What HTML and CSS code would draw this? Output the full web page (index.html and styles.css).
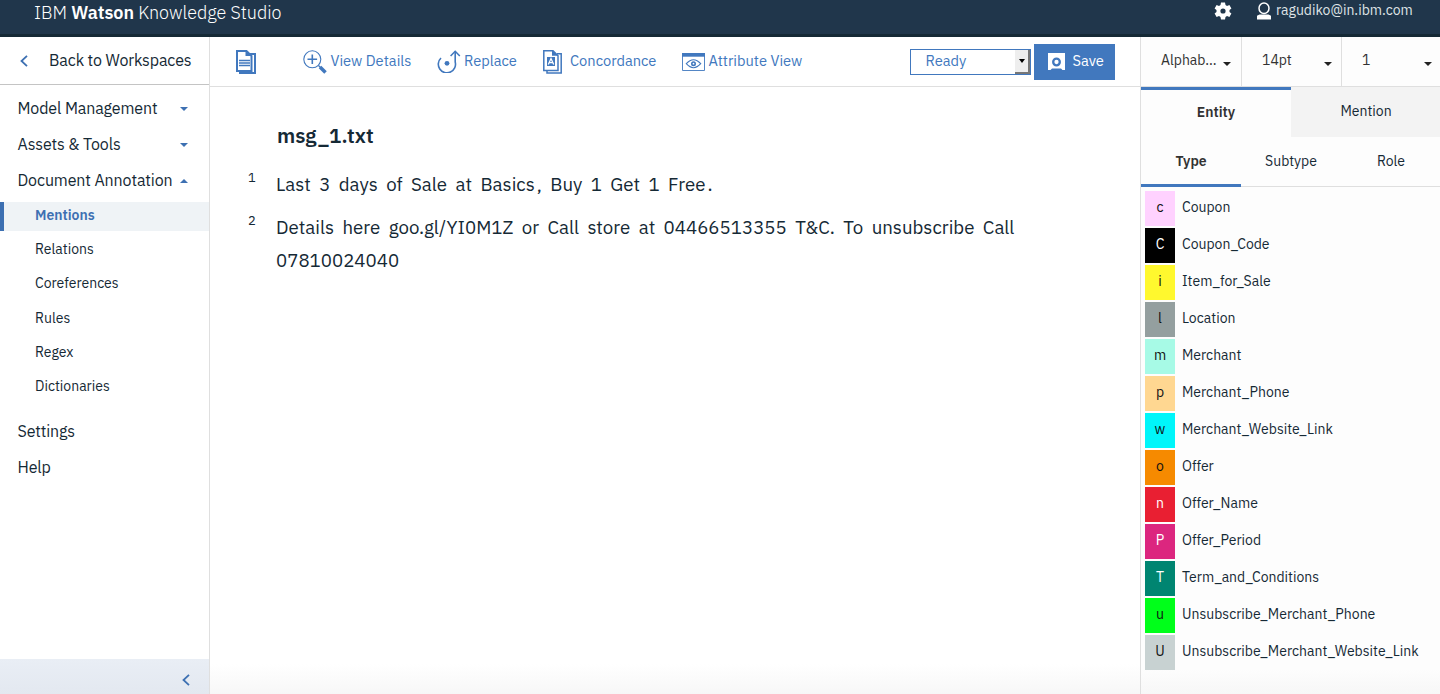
FILE: index.html
```html
<!DOCTYPE html>
<html lang="en">
<head>
<meta charset="utf-8">
<title>IBM Watson Knowledge Studio</title>
<link rel="stylesheet" href="styles.css">
</head>
<body>
<header class="topbar">
  <div class="brand">IBM <b>Watson</b> Knowledge Studio</div>
  <svg class="gear" width="18" height="18" viewBox="0 0 18 18"><path fill="#fff" fill-rule="evenodd" d="M7 .5h4l.5 2.500 1.500.9 2.400-.9 2 3.500-1.900 1.600v1.800l1.900 1.600-2 3.500-2.400-.9-1.500.9-.5 2.500H7L6.500 15 5 14.100 2.600 15l-2-3.500 1.900-1.600V8.100L.6 6.500l2-3.500 2.400.9L6.500 3zM9 6.400a2.600 2.600 0 1 0 0 5.200 2.600 2.600 0 0 0 0-5.200z"/></svg>
  <svg class="person" width="14" height="18" viewBox="0 0 14 18"><ellipse cx="7" cy="6.300" rx="5" ry="5.300" fill="none" stroke="#fff" stroke-width="1.500"/><path d="M0 17.500V13.800l2.500-1.300h9l2.500 1.300v3.700z" fill="#fff"/></svg>
  <span class="user">ragudiko@in.ibm.com</span>
</header>
<div class="shell">
  <nav class="sidebar">
    <a class="back"><svg width="8" height="12" viewBox="0 0 8 12"><path d="M7 .8 1.500 6 7 11.200" fill="none" stroke="#3d70b2" stroke-width="1.800"/></svg><span>Back to Workspaces</span></a>
    <div class="menu">
      <a class="item"><span>Model Management</span><i class="caret"></i></a>
      <a class="item"><span>Assets &amp; Tools</span><i class="caret"></i></a>
      <a class="item"><span>Document Annotation</span><i class="caret up"></i></a>
      <div class="submenu">
        <a class="sub active">Mentions</a>
        <a class="sub">Relations</a>
        <a class="sub">Coreferences</a>
        <a class="sub">Rules</a>
        <a class="sub">Regex</a>
        <a class="sub">Dictionaries</a>
      </div>
      <a class="item"><span>Settings</span></a>
      <a class="item"><span>Help</span></a>
    </div>
    <div class="collapse"><svg width="8" height="12" viewBox="0 0 8 12"><path d="M7 .8 1.500 6 7 11.200" fill="none" stroke="#3d70b2" stroke-width="1.800"/></svg></div>
  </nav>
  <main class="main">
    <div class="toolbar">
      <svg class="ic-doc" width="20" height="24" viewBox="0 0 20 24" fill="none" stroke="#4178be"><path d="M1 1h9.500l5 5v15H1z" stroke-width="2"/><path d="M9.500 0v6H16z" fill="#4178be" stroke="none"/><path d="M14 4h5v19H4v-2" stroke-width="2"/><path d="M3 10.500h11M3 13h11M3 15.500h11" stroke-width="1.300"/></svg>
      <a class="tool view"><svg width="24" height="24" viewBox="0 0 24 24" fill="none" stroke="#4178be"><circle cx="9.300" cy="9.300" r="8.500" stroke-width="1.100"/><path d="M9.300 4.500v9.600M4.500 9.300h9.600" stroke-width="1.600"/><path d="m15.500 15.500 2 2" stroke-width="1.300"/><path d="m17 17 5.500 5.500" stroke-width="3.500"/></svg><span>View Details</span></a>
      <a class="tool replace"><svg width="24" height="23" viewBox="0 0 24 23" fill="none" stroke="#4178be" stroke-width="1.600"><path d="M4 8A8.600 8.600 0 1 0 18.200 12V1.500"/><path d="m13.600 6 4.600-4.700L22.800 6"/><circle cx="10" cy="13.300" r="2.400" fill="#4178be" stroke="none"/></svg><span>Replace</span></a>
      <a class="tool conc"><svg width="20" height="24" viewBox="0 0 20 24" fill="none" stroke="#4178be"><path d="M.8.800H10l5 5v14.700H.8z" stroke-width="1.500"/><path d="M9 0v5.800h6.500z" fill="#4178be" stroke="none"/><path d="M14 3.700h4.200V23H4v-2.500" stroke-width="1.500"/><path d="M4 7h8v9H4z" fill="#4178be" stroke="none"/><path d="m5.300 14.500 2.700-6 2.700 6M6.500 12.600h3" stroke="#fff" stroke-width="1.300"/></svg><span>Concordance</span></a>
      <a class="tool attr"><svg width="23" height="18" viewBox="0 0 23 18" fill="none" stroke="#4178be"><path d="M.5.500h22v17H.5z" stroke-width=".9"/><path d="M0 0h23v3.700H0z" fill="#4178be" stroke="none"/><path d="M4.300 10.700Q11.500 2.700 18.700 10.700 11.500 18.700 4.300 10.700z" stroke-width="1.100"/><circle cx="11.500" cy="10.700" r="1.700" stroke-width="1.600"/></svg><span>Attribute View</span></a>
      <div class="status"><span>Ready</span><i class="arrowbox"><b></b></i></div>
      <button class="save"><svg width="17" height="17" viewBox="0 0 17 17"><path d="M0 0h17v17h-2.500l-1.500-1.500H4L2.500 17H0z" fill="#fff"/><circle cx="8.500" cy="9" r="3.300" fill="none" stroke="#4178be" stroke-width="2.300"/></svg><span>Save</span></button>
    </div>
    <article class="doc">
      <h1>msg_1.txt</h1>
      <div class="line"><span class="num">1</span><p>Last 3 days of Sale at Basics<span class="punct">,</span> Buy 1 Get 1 Free<span class="punct">.</span></p></div>
      <div class="line"><span class="num">2</span><p>Details here goo.gl/YI0M1Z or Call store at 04466513355 T&amp;C. To unsubscribe Call<br>07810024040</p></div>
    </article>
  </main>
  <aside class="panel">
    <div class="selects">
      <div class="sel"><span>Alphab...</span><i></i></div>
      <div class="sel"><span>14pt</span><i></i></div>
      <div class="sel"><span>1</span><i></i></div>
    </div>
    <div class="tabs"><div class="tab on">Entity</div><div class="tab">Mention</div></div>
    <div class="subtabs"><div class="on">Type</div><div>Subtype</div><div>Role</div></div>
    <ul class="types">
      <li><b class="k-coupon">c</b><span>Coupon</span></li>
      <li><b class="k-code lt">C</b><span>Coupon_Code</span></li>
      <li><b class="k-item">i</b><span>Item_for_Sale</span></li>
      <li><b class="k-loc">l</b><span>Location</span></li>
      <li><b class="k-mer">m</b><span>Merchant</span></li>
      <li><b class="k-phone">p</b><span>Merchant_Phone</span></li>
      <li><b class="k-web">w</b><span>Merchant_Website_Link</span></li>
      <li><b class="k-offer">o</b><span>Offer</span></li>
      <li><b class="k-name lt">n</b><span>Offer_Name</span></li>
      <li><b class="k-period lt">P</b><span>Offer_Period</span></li>
      <li><b class="k-terms lt">T</b><span>Term_and_Conditions</span></li>
      <li><b class="k-uphone">u</b><span>Unsubscribe_Merchant_Phone</span></li>
      <li><b class="k-ulink">U</b><span>Unsubscribe_Merchant_Website_Link</span></li>
    </ul>
  </aside>
</div>
</body>
</html>
```
FILE: styles.css
```css
* { box-sizing: border-box; }
body { margin: 0; height: 694px; overflow: hidden; display: flex; flex-direction: column; font-family: "IBM Plex Sans", Roboto, "Noto Sans", sans-serif; font-size: 14px; color: #152935; background: #fff; }
.topbar { height: 37px; flex: none; display: flex; align-items: flex-start; background: #20364b; border-bottom: 3px solid #152935; color: #fff; padding: 0 27px 0 34px; }
.brand { font-size: 18px; line-height: 26px; font-weight: 300; letter-spacing: -.03px; flex: 1; white-space: nowrap; }
.brand b { font-weight: 600; }
.gear { margin: 2px 25px 0 0; }
.person { margin: 2px 5px 0 0; }
.user { line-height: 21px; width: 137px; white-space: nowrap; color: #dfe3e6; }
.shell { flex: 1; display: flex; min-height: 0; }
.sidebar { width: 210px; flex: none; border-right: 1px solid #dfdfdf; display: flex; flex-direction: column; }
.back { height: 48px; flex: none; border-bottom: 1px solid #c4c4c4; display: flex; align-items: center; padding-left: 20px; font-size: 16px; white-space: nowrap; }
.back span { margin: 0 0 2px 21px; letter-spacing: -.13px; }
.menu { padding: 5px 0; flex: 1; }
.item { height: 36px; display: flex; align-items: center; justify-content: space-between; padding: 0 21px 0 17.500px; font-size: 16px; letter-spacing: -.12px; white-space: nowrap; }
.item span { margin-bottom: 1px; }
.caret { border: 4px solid transparent; border-top: 4px solid #3d70b2; border-bottom: 0; margin-top: 1px; }
.caret.up { border-top: 0; border-bottom: 4px solid #3d70b2; }
.submenu { padding: 4px 0 6px; }
.sub { display: flex; align-items: center; height: 29px; margin-bottom: 5.200px; padding: 0 0 3px 35px; }
.sub.active { background: #eff3f6; border-left: 4px solid #3d70b2; padding-left: 31px; color: #3d70b2; font-weight: 600; }
.collapse { height: 35px; display: flex; align-items: center; justify-content: flex-end; padding: 7px 19px 0 0; background: linear-gradient(#e9eef5, #e3e8f0); }
.main { flex: 1; min-width: 0; display: flex; flex-direction: column; background: linear-gradient(#fff calc(100% - 30px), #f7f7f7); }
.toolbar { height: 50px; flex: none; border-bottom: 1px solid #dfdfdf; display: flex; align-items: center; color: #4178be; padding-left: 26px; font-size: 14.670px; white-space: nowrap; }
.toolbar span { margin-bottom: 2px; }
.ic-doc { margin-right: 47px; }
.tool { display: flex; align-items: center; flex: none; }
.tool svg { margin-right: 3.500px; }
.view { width: 134px; }
.replace { width: 106px; }
.replace svg { margin-right: 3px; }
.conc { width: 139px; }
.conc svg { margin-right: 7px; }
.attr { width: 228px; }
.status { width: 121px; height: 26px; border: 1px solid #4178be; display: flex; align-items: center; justify-content: space-between; padding-left: 14.500px; }
.arrowbox { width: 15px; height: 24px; background: #eee; border-right: 2px solid #777; border-bottom: 2px solid #777; display: flex; align-items: center; justify-content: center; }
.arrowbox b { border: 3px solid transparent; border-top: 4px solid #000; border-bottom: 0; }
.save { margin-left: 3px; width: 81px; height: 36px; border: 0; background: #4178be; color: #fff; font: inherit; display: flex; align-items: center; padding: 0 0 0 14px; gap: 7.500px; }
.doc { padding: 35px 38px 0; }
h1 { margin: 0 0 18px 29px; font-size: 20.500px; line-height: 28px; font-weight: 600; }
.line { display: flex; align-items: flex-start; margin-bottom: 10px; }
.num { width: 28px; font-size: 13px; line-height: 20px; flex: none; }
.line p { margin: 0; font-size: 18.670px; line-height: 33px; word-spacing: 4px; white-space: nowrap; }
.punct { margin-left: 2px; }
.panel { width: 300px; flex: none; border-left: 1px solid #dfdfdf; background: linear-gradient(#fdfdfd calc(100% - 25px), #f7f7f7); }
.selects { height: 50px; display: flex; border-bottom: 1px solid #dfdfdf; }
.sel { flex: none; width: 100px; display: flex; justify-content: space-between; align-items: center; padding: 0 10px 3px 20px; color: #323232; }
.sel + .sel { border-left: 1px solid #dfdfdf; padding-right: 9px; }
.sel + .sel + .sel { width: 99px; padding-right: 8px; }
.sel i { border: 4px solid transparent; border-top-color: #222; border-bottom: 0; margin-top: 7px; }
.tabs { height: 50px; display: flex; }
.tab { width: 150px; flex: none; display: flex; justify-content: center; align-items: center; background: #f3f3f3; padding-bottom: 2px; }
.tab.on { background: #fdfdfd; border-top: 3px solid #4178be; padding-bottom: 4px; font-weight: 600; color: #323232; }
.subtabs { height: 50px; display: flex; border-bottom: 1px solid #dfdfdf; }
.subtabs div { width: 100px; flex: none; height: 50px; line-height: 48px; text-align: center; }
.subtabs .on { border-bottom: 3px solid #4178be; font-weight: 600; color: #323232; }
.types { list-style: none; margin: 0; padding: 4px 0 0 4px; display: grid; gap: 2px; }
.types li { height: 35px; display: flex; }
.types b { width: 30px; line-height: 33px; text-align: center; font-weight: 400; color: #111; margin-right: 7px; }
.types .lt { color: #fff; }
.types span { line-height: 33px; white-space: nowrap; }
.k-coupon { background: #ffd2ff; }
.k-code { background: #000; }
.k-item { background: #fff82e; }
.k-loc { background: #949f9f; }
.k-mer { background: #a7fae6; }
.k-phone { background: #ffd791; }
.k-web { background: #00f6fa; }
.k-offer { background: #f68a00; }
.k-name { background: #e91f32; }
.k-period { background: #dc267f; }
.k-terms { background: #008571; }
.k-uphone { background: #00ff1a; }
.k-ulink { background: #c8d2d2; }
```
